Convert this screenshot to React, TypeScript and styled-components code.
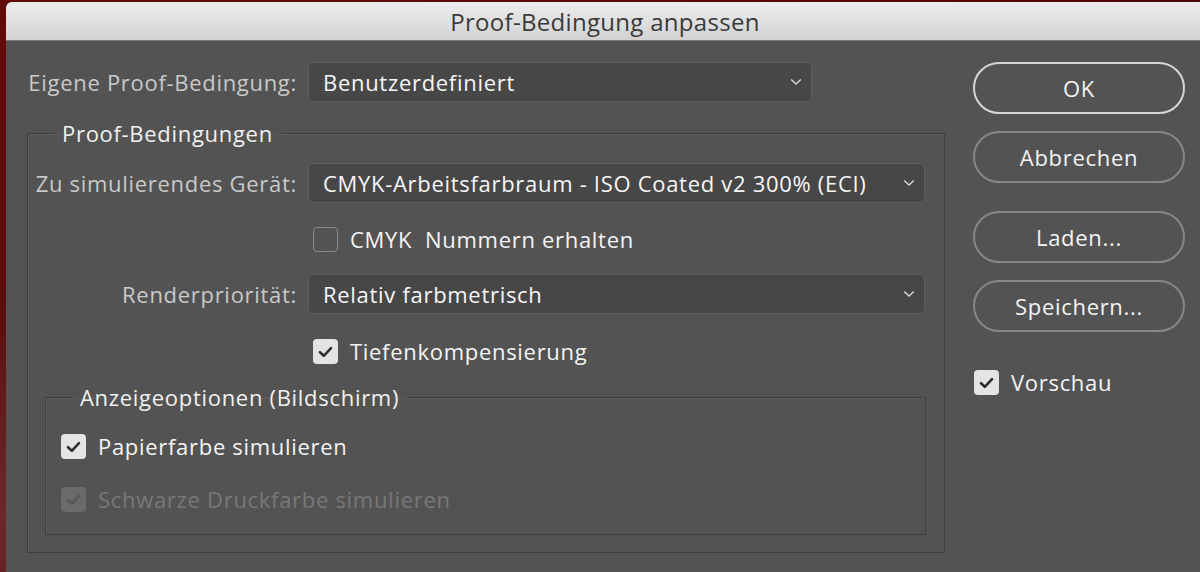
import React from "react";
import styled, { createGlobalStyle, css } from "styled-components";

const Global = createGlobalStyle`
  html, body { margin: 0; padding: 0; }
  body { width: 1200px; height: 572px; overflow: hidden; background: #4a0808; }
  #root { width: 1200px; height: 572px; }
`;

const uiText = css`
  font-size: 22px;
  font-weight: 500;
  letter-spacing: 0.7px;
  white-space: pre;
`;

const Desktop = styled.div`
  width: 1200px;
  height: 572px;
  overflow: hidden;
  background: radial-gradient(ellipse at 0% 90%, #6a2a2a 0%, #5a0d0d 30%, #620a0a 70%, #4e0606 100%);
  padding: 2px 0 0 6px;
  box-sizing: border-box;
  font-family: "Open Sans", "Noto Sans", sans-serif;
`;

const Window = styled.div`
  width: 1210px;
  height: 600px;
  background: #535353;
  border-radius: 6px 6px 0 0;
  overflow: hidden;
  display: flex;
  flex-direction: column;
`;

const TitleBar = styled.div`
  height: 38px;
  flex: none;
  background: linear-gradient(#ededed, #d2d2d2);
  border-bottom: 1px solid #7d7d7d;
  display: flex;
  align-items: center;
  justify-content: center;
  padding-right: 12px;
  font-size: 24px;
  letter-spacing: 0.3px;
  color: #3a3a3a;
`;

const Body = styled.div`
  display: flex;
  padding: 21px 0 0 21px;
  gap: 28px;
`;

const LeftCol = styled.div`
  width: 918px;
  display: flex;
  flex-direction: column;
`;

const Row = styled.div<{ $mt?: number; $labelW: number }>`
  display: flex;
  align-items: center;
  height: 40px;
  margin-top: ${(p) => p.$mt ?? 0}px;
  & > label {
    width: ${(p) => p.$labelW}px;
  }
`;

const Label = styled.label`
  ${uiText};
  flex: none;
  text-align: right;
  padding-right: 11px;
  box-sizing: border-box;
  color: #c9c9c9;
`;

const Select = styled.div<{ $w: number }>`
  ${uiText};
  width: ${(p) => p.$w}px;
  height: 40px;
  box-sizing: border-box;
  background: #474747;
  border: 1px solid #5f5f5f;
  border-radius: 5px;
  display: flex;
  align-items: center;
  justify-content: space-between;
  padding: 0 9px 0 14px;
  color: #f6f6f6;
`;

const Chevron = () => (
  <svg width="12" height="8" viewBox="0 0 12 8">
    <path d="M1.2 1.5 L6 6 L10.8 1.5" fill="none" stroke="#d8d8d8" strokeWidth="1.4" />
  </svg>
);

const Group = styled.fieldset<{ $mt?: number; $ml?: number; $w: number; $h: number; $legendX: number }>`
  margin: ${(p) => p.$mt ?? 0}px 0 0 ${(p) => p.$ml ?? 0}px;
  padding: 0;
  width: ${(p) => p.$w}px;
  height: ${(p) => p.$h}px;
  box-sizing: border-box;
  border: 1px solid #3f3f3f;
  box-shadow: 1px 1px 0 #5c5c5c inset;
  min-inline-size: 0;
  & > legend {
    ${uiText};
    margin-left: ${(p) => p.$legendX}px;
    padding: 0 8px;
    color: #f0f0f0;
    line-height: 24px;
    height: 24px;
  }
`;

const GroupInner = styled.div<{ $pl: number }>`
  display: flex;
  flex-direction: column;
  padding-left: ${(p) => p.$pl}px;
`;

const CheckRow = styled.div<{ $mt?: number; $ml?: number; $disabled?: boolean }>`
  ${uiText};
  display: flex;
  align-items: center;
  gap: 12px;
  height: 25px;
  line-height: 25px;
  margin-top: ${(p) => p.$mt ?? 0}px;
  margin-left: ${(p) => p.$ml ?? 0}px;
  color: ${(p) => (p.$disabled ? "#787878" : "#f4f4f4")};
`;

const Box = styled.span<{ $checked?: boolean; $disabled?: boolean }>`
  width: 25px;
  height: 25px;
  flex: none;
  box-sizing: border-box;
  border-radius: 4px;
  display: flex;
  align-items: center;
  justify-content: center;
  background: ${(p) => (p.$disabled ? "#6a6a6a" : p.$checked ? "#e4e4e4" : "transparent")};
  border: ${(p) => (p.$checked ? "none" : "1.5px solid #8a8a8a")};
`;

const Check = ({ color }: { color: string }) => (
  <svg width="15" height="12" viewBox="0 0 15 12">
    <path d="M2 6.2 L5.8 9.8 L13 2.2" fill="none" stroke={color} strokeWidth="2.6" strokeLinecap="round" strokeLinejoin="round" />
  </svg>
);

const CheckBox = ({ checked, disabled, label, mt, ml }: { checked?: boolean; disabled?: boolean; label: string; mt?: number; ml?: number }) => (
  <CheckRow $mt={mt} $ml={ml} $disabled={disabled}>
    <Box $checked={checked} $disabled={disabled}>
      {checked && <Check color={disabled ? "#575757" : "#2e2e2e"} />}
    </Box>
    <span>{label}</span>
  </CheckRow>
);

const RightCol = styled.div`
  width: 212px;
  display: flex;
  flex-direction: column;
`;

const Button = styled.div<{ $primary?: boolean; $mt?: number }>`
  ${uiText};
  height: 52px;
  box-sizing: border-box;
  margin-top: ${(p) => p.$mt ?? 0}px;
  border-radius: 26px;
  border: 2px solid ${(p) => (p.$primary ? "#d6d6d6" : "#878787")};
  display: flex;
  align-items: center;
  justify-content: center;
  color: #f4f4f4;
`;

export default function App() {
  return (
    <>
      <Global />
      <Desktop>
        <Window>
          <TitleBar>Proof-Bedingung anpassen</TitleBar>
          <Body>
            <LeftCol>
              <Row $labelW={281}>
                <Label>Eigene Proof-Bedingung:</Label>
                <Select $w={504}>
                  <span>Benutzerdefiniert</span>
                  <Chevron />
                </Select>
              </Row>
              <Group $mt={19} $w={918} $h={432} $legendX={26}>
                <legend>Proof-Bedingungen</legend>
                <GroupInner $pl={0}>
                  <Row $mt={18} $labelW={280}>
                    <Label>Zu simulierendes Gerät:</Label>
                    <Select $w={617}>
                      <span>CMYK-Arbeitsfarbraum - ISO Coated v2 300% (ECI)</span>
                      <Chevron />
                    </Select>
                  </Row>
                  <CheckBox ml={285} mt={24} label="CMYK  Nummern erhalten" />
                  <Row $mt={22} $labelW={280}>
                    <Label>Renderpriorität:</Label>
                    <Select $w={617}>
                      <span>Relativ farbmetrisch</span>
                      <Chevron />
                    </Select>
                  </Row>
                  <CheckBox ml={285} mt={25} checked label="Tiefenkompensierung" />
                  <Group $mt={21} $ml={17} $w={881} $h={150} $legendX={26}>
                    <legend>Anzeigeoptionen (Bildschirm)</legend>
                    <GroupInner $pl={15}>
                      <CheckBox mt={25} checked label="Papierfarbe simulieren" />
                      <CheckBox mt={28} checked disabled label="Schwarze Druckfarbe simulieren" />
                    </GroupInner>
                  </Group>
                </GroupInner>
              </Group>
            </LeftCol>
            <RightCol>
              <Button $primary>OK</Button>
              <Button $mt={17}>Abbrechen</Button>
              <Button $mt={28}>Laden...</Button>
              <Button $mt={17}>Speichern...</Button>
              <CheckRow $mt={38} $ml={1}>
                <Box $checked>
                  <Check color="#2e2e2e" />
                </Box>
                <span>Vorschau</span>
              </CheckRow>
            </RightCol>
          </Body>
        </Window>
      </Desktop>
    </>
  );
}
